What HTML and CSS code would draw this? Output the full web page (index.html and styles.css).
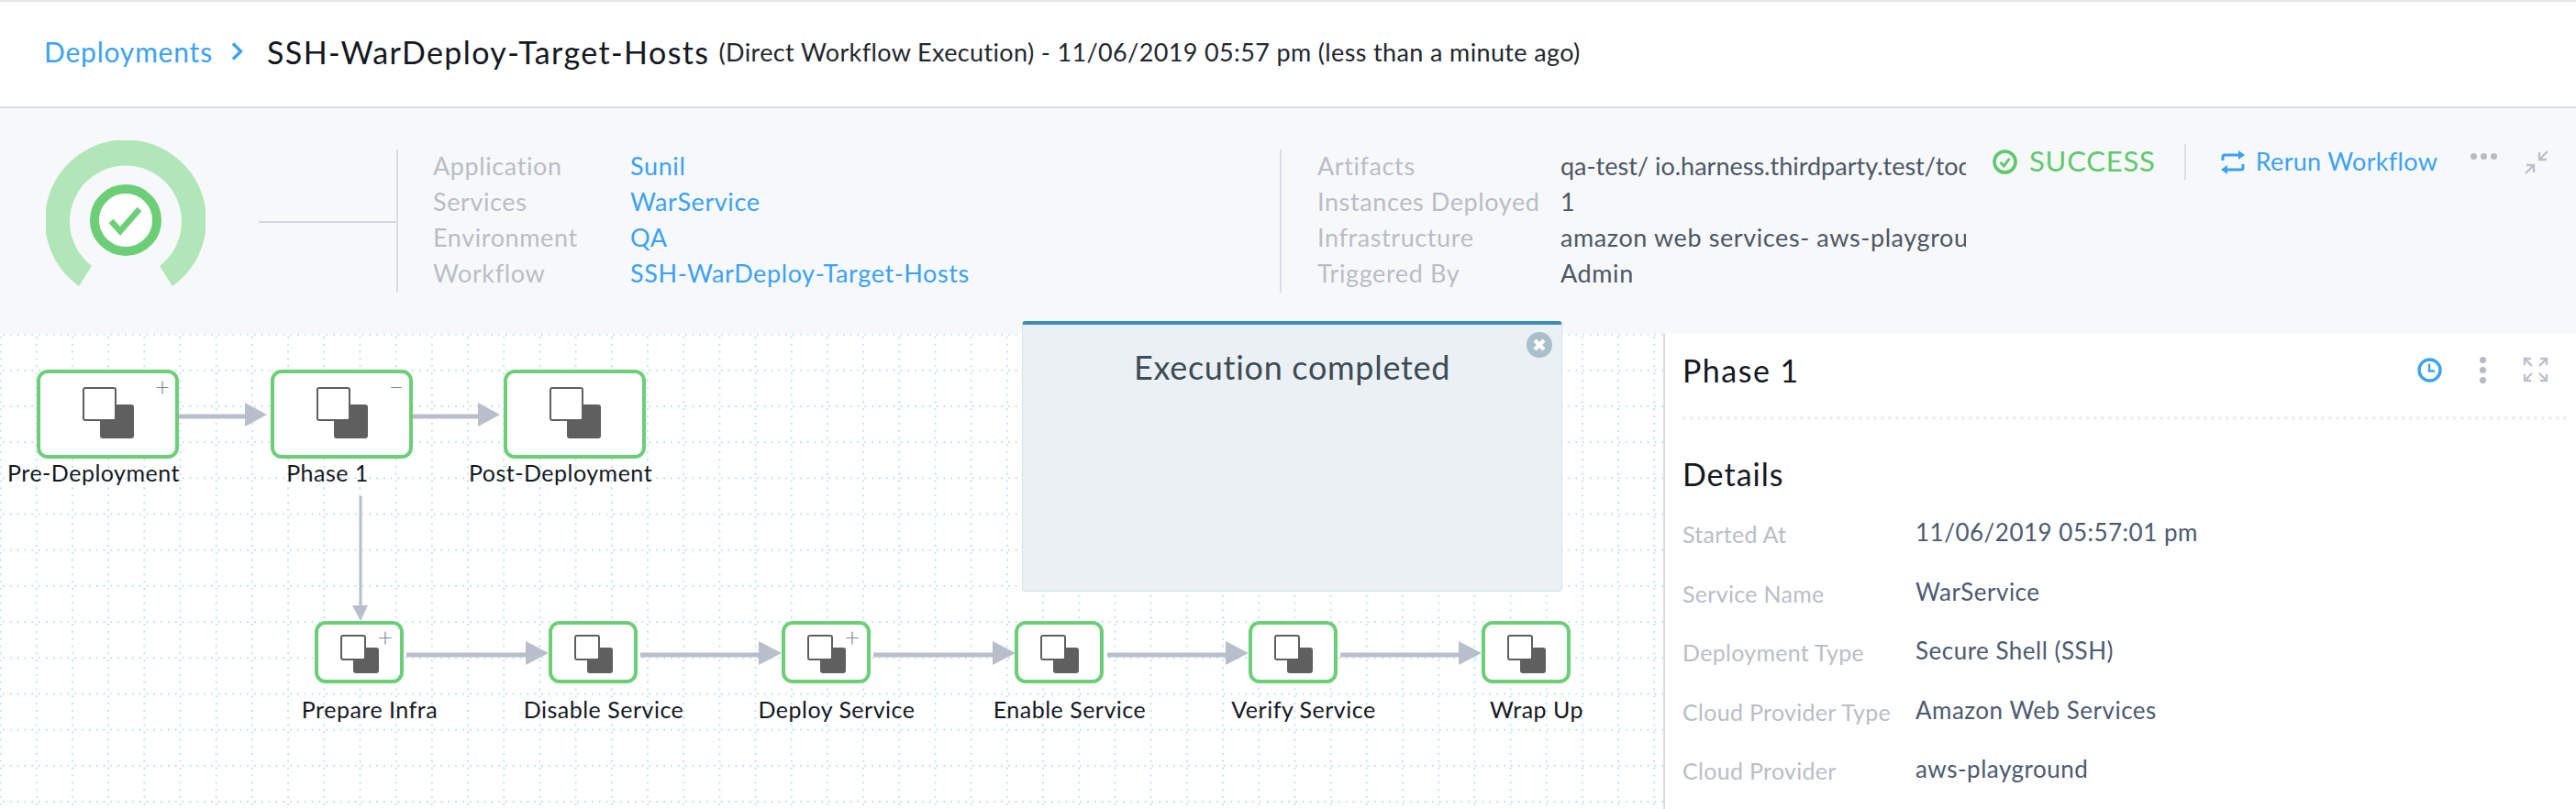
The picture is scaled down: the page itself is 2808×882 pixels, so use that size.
FILE: index.html
```html
<!DOCTYPE html>
<html lang="en">
<head>
    <meta charset="UTF-8" />
    <title>Deployments</title>
    <link rel="stylesheet" href="styles.css">
</head>
<body>
<header class="page-header">
    <a class="crumb">Deployments</a>
    <svg class="crumb-arrow" width="13" height="20" viewBox="0 0 13 20"><path d="M2 1.5 L10.5 10 L2 18.5" fill="none" stroke="#3ba2f2" stroke-width="3.4"/></svg>
    <span class="title">SSH-WarDeploy-Target-Hosts</span>
    <span class="subtitle">(Direct Workflow Execution) - 11/06/2019 05:57 pm (less than a minute ago)</span>
</header>

<section class="summary">
    <svg class="gauge" width="174" height="160" viewBox="50 153 174 160">
        <path d="M86 312 A88 88 0 1 1 188 312 L174 290 A61 61 0 1 0 100 290 Z" fill="#b0e6b8"/>
        <circle cx="137" cy="240" r="34" fill="#fff" stroke="#6ccf77" stroke-width="10"/>
        <path d="M121 241 L131 252 L152 228" fill="none" stroke="#6ccf77" stroke-width="6.5"/>
    </svg>
    <div class="connector"></div>
    <div class="info info-app">
        <div class="info-row"><span class="info-label">Application</span><a class="info-link">Sunil</a></div>
        <div class="info-row"><span class="info-label">Services</span><a class="info-link">WarService</a></div>
        <div class="info-row"><span class="info-label">Environment</span><a class="info-link">QA</a></div>
        <div class="info-row"><span class="info-label">Workflow</span><a class="info-link">SSH-WarDeploy-Target-Hosts</a></div>
    </div>
    <div class="info info-run">
        <div class="info-row"><span class="info-label">Artifacts</span><span class="info-value info-artifact">qa-test/ io.harness.thirdparty.test/todolist</span></div>
        <div class="info-row"><span class="info-label">Instances Deployed</span><span class="info-value">1</span></div>
        <div class="info-row"><span class="info-label">Infrastructure</span><span class="info-value">amazon web services- aws-playground</span></div>
        <div class="info-row"><span class="info-label">Triggered By</span><span class="info-value">Admin</span></div>
    </div>
    <div class="actions">
        <svg class="status-icon" width="27" height="27" viewBox="0 0 27 27">
            <circle cx="13.5" cy="13.5" r="11.5" fill="none" stroke="#5fc96d" stroke-width="3.6"/>
            <path d="M8.5 14 L12.3 18 L18.5 9.8" fill="none" stroke="#5fc96d" stroke-width="3"/>
        </svg>
        <span class="status">SUCCESS</span>
        <span class="divider"></span>
        <svg class="rerun-icon" width="28" height="28" viewBox="0 0 28 28">
            <path d="M3 12 V8 Q3 6 5 6 H21 M25 16 V20 Q25 22 23 22 H7" fill="none" stroke="#3ba2f2" stroke-width="3"/>
            <path d="M20 1 L27 6 L20 11 Z M8 17 L1 22 L8 27 Z" fill="#3ba2f2"/>
        </svg>
        <a class="rerun">Rerun Workflow</a>
        <span class="more-dots"><i></i><i></i><i></i></span>
        <svg class="corner-icon" width="28" height="28" viewBox="0 0 28 28">
            <path d="M26 2 L17 11 M17 3 V11 H25 M2 26 L11 17 M3 17 H11 V25" fill="none" stroke="#bcc0c8" stroke-width="2.4"/>
        </svg>
    </div>
</section>

<main class="workspace">
    <div class="canvas">
        <svg class="edges" width="1813" height="518" viewBox="0 364 1813 518">
            <g class="edge-big">
                <path d="M195 454 H270 M449 454 H524"/>
            </g>
            <path class="edge-down" d="M393 541 V662"/>
            <g class="edge-small">
                <path d="M443 714 H575 M698 714 H830 M952 714 H1084 M1207 714 H1339 M1461 714 H1593"/>
            </g>
            <g class="edge-head">
                <polygon points="267,439 291,452 267,465"/>
                <polygon points="521,439 545,452 521,465"/>
                <polygon points="384,660 401,660 393,677"/>
                <polygon points="573,699 598,712 573,725"/>
                <polygon points="827,699 852,712 827,725"/>
                <polygon points="1082,699 1107,712 1082,725"/>
                <polygon points="1336,699 1361,712 1336,725"/>
                <polygon points="1590,699 1615,712 1590,725"/>
            </g>
        </svg>

        <div class="node node-big n-pre">
            <div class="node-box"><span class="shape-back"></span><span class="shape-front"></span><span class="toggle">+</span></div>
            <div class="node-label">Pre-Deployment</div>
        </div>
        <div class="node node-big n-phase">
            <div class="node-box"><span class="shape-back"></span><span class="shape-front"></span><span class="toggle">&minus;</span></div>
            <div class="node-label">Phase 1</div>
        </div>
        <div class="node node-big n-post">
            <div class="node-box"><span class="shape-back"></span><span class="shape-front"></span></div>
            <div class="node-label">Post-Deployment</div>
        </div>

        <div class="node node-small n-s1">
            <div class="node-box"><span class="shape-back"></span><span class="shape-front"></span><span class="toggle">+</span></div>
            <div class="node-label">Prepare Infra</div>
        </div>
        <div class="node node-small n-s2">
            <div class="node-box"><span class="shape-back"></span><span class="shape-front"></span></div>
            <div class="node-label">Disable Service</div>
        </div>
        <div class="node node-small n-s3">
            <div class="node-box"><span class="shape-back"></span><span class="shape-front"></span><span class="toggle">+</span></div>
            <div class="node-label">Deploy Service</div>
        </div>
        <div class="node node-small n-s4">
            <div class="node-box"><span class="shape-back"></span><span class="shape-front"></span></div>
            <div class="node-label">Enable Service</div>
        </div>
        <div class="node node-small n-s5">
            <div class="node-box"><span class="shape-back"></span><span class="shape-front"></span></div>
            <div class="node-label">Verify Service</div>
        </div>
        <div class="node node-small n-s6">
            <div class="node-box"><span class="shape-back"></span><span class="shape-front"></span></div>
            <div class="node-label">Wrap Up</div>
        </div>

        <div class="toast">
            <svg class="toast-close" width="28" height="28" viewBox="0 0 28 28">
                <circle cx="14" cy="14" r="14" fill="#a9bfcc"/>
                <path d="M9 9 L19 19 M19 9 L9 19" stroke="#fff" stroke-width="4.4"/>
            </svg>
            <div class="toast-text">Execution completed</div>
        </div>
    </div>

    <aside class="panel">
        <div class="panel-head">
            <h2>Phase 1</h2>
            <svg class="clock" width="27" height="27" viewBox="0 0 27 27">
                <circle cx="13.5" cy="13.5" r="11.5" fill="none" stroke="#3ba2f2" stroke-width="3.4"/>
                <path d="M13 6.5 V14.5 H19" fill="none" stroke="#3ba2f2" stroke-width="2.4"/>
            </svg>
            <span class="kebab"><i></i><i></i><i></i></span>
            <svg class="corner-icon" width="28" height="28" viewBox="0 0 28 28">
                <path d="M2 2 L10 10 M2 9 V2 H9 M26 2 L18 10 M19 2 H26 V9 M2 26 L10 18 M2 19 V26 H9 M26 26 L18 18 M26 19 V26 H19" fill="none" stroke="#bcc0c8" stroke-width="2.4"/>
            </svg>
        </div>
        <h3>Details</h3>
        <div class="detail"><span class="detail-label">Started At</span><span class="detail-value">11/06/2019 05:57:01 pm</span></div>
        <div class="detail"><span class="detail-label">Service Name</span><span class="detail-value">WarService</span></div>
        <div class="detail"><span class="detail-label">Deployment Type</span><span class="detail-value">Secure Shell (SSH)</span></div>
        <div class="detail"><span class="detail-label">Cloud Provider Type</span><span class="detail-value">Amazon Web Services</span></div>
        <div class="detail"><span class="detail-label">Cloud Provider</span><span class="detail-value">aws-playground</span></div>
    </aside>
</main>
</body>
</html>
```

FILE: styles.css
```css
* {
    box-sizing: border-box;
}

html, body {
    height: 100%;
}

body {
    margin: 0;
    width: 2808px;
    height: 882px;
    overflow: hidden;
    display: flex;
    flex-direction: column;
    font-family: Lato, "Open Sans", sans-serif;
    background: white;
}

/* top bar */
.page-header {
    height: 118px;
    flex: none;
    display: flex;
    align-items: center;
    padding: 0 0 6px 48px;
    border-top: 2px solid #e4e6ea;
    border-bottom: 2px solid #d9dce3;
    white-space: nowrap;
}

.crumb {
    font-size: 30px;
    letter-spacing: 0.8px;
    color: #3ba2f2;
}

.crumb-arrow {
    margin: 0 26px 0 20px;
}

.title {
    font-size: 34px;
    letter-spacing: 1.4px;
    color: #14181f;
}

.subtitle {
    margin-left: 10px;
    font-size: 27px;
    letter-spacing: 0.36px;
    color: #22272e;
}

/* summary strip */
.summary {
    height: 246px;
    flex: none;
    display: flex;
    align-items: flex-start;
    padding: 35px 0 0 50px;
    background: #f7f8fa;
    font-size: 27px;
    letter-spacing: 0.6px;
}

.connector {
    width: 150px;
    height: 2px;
    margin: 88px 0 0 58px;
    background: #d5d8e0;
}

.info {
    margin-top: 10px;
    height: 156px;
    border-left: 2px solid #d9dce3;
}

.info-app {
    width: 963px;
    padding-left: 38px;
}

.info-run {
    width: 748px;
    padding-left: 39px;
}

.info-row {
    display: flex;
    height: 39px;
    padding-bottom: 4px;
    align-items: center;
    white-space: nowrap;
}

.info-label {
    flex: none;
    color: #b9bdc7;
}

.info-app .info-label {
    width: 215px;
}

.info-run .info-label {
    width: 265px;
}

.info-link {
    color: #3ba2f2;
}

.info-value {
    width: 442px;
    overflow: hidden;
    color: #4c5766;
}

.info-artifact {
    letter-spacing: 0;
}

.actions {
    display: flex;
    align-items: center;
    height: 39px;
    margin: 4px 0 0 29px;
}

.status {
    margin: 0 0 3px 13px;
    font-size: 31px;
    letter-spacing: 0.8px;
    color: #5fc96d;
}

.divider {
    width: 2px;
    height: 39px;
    margin: 0 37px 0 31px;
    background: #dcdee3;
}

.rerun {
    margin: 0 0 3px 11px;
    font-size: 27px;
    letter-spacing: 0.3px;
    color: #3ba2f2;
}

.more-dots {
    display: flex;
    gap: 4px;
    margin: -12px 29px 0 36px;
}

.more-dots i, .kebab i {
    display: block;
    width: 7px;
    height: 7px;
    border-radius: 50%;
    background: #b6bac4;
}

/* graph area */
.workspace {
    flex: 1;
    display: flex;
    min-height: 0;
}

.canvas {
    position: relative;
    width: 1813px;
    flex: none;
    background-color: white;
    background-image:
        radial-gradient(circle, #bde3ee 1.2px, transparent 1.5px),
        radial-gradient(circle, #bde3ee 1.2px, transparent 1.5px);
    background-size: 7.84px 39.2px, 39.2px 7.84px;
    background-position: 0 -19px, -19px 0;
}

.edges {
    position: absolute;
    left: 0;
    top: 0;
}

.edges path {
    fill: none;
    stroke: #b8bfcb;
}

.edge-big path {
    stroke-width: 5;
}

.edge-down {
    stroke-width: 3;
}

.edge-small path {
    stroke-width: 5;
}

.edge-head polygon {
    fill: #b8bfcb;
}

.node {
    position: absolute;
}

.node-box {
    position: relative;
    border: 4px solid #6ccf77;
    border-radius: 12px;
    background: white;
}

.node-big {
    top: 39px;
    width: 155px;
}

.node-big .node-box {
    height: 97px;
}

.node-small {
    top: 313px;
    width: 97px;
}

.node-small .node-box {
    height: 68px;
}

.n-pre { left: 40px; }
.n-phase { left: 295px; }
.n-post { left: 549px; }
.n-s1 { left: 343px; }
.n-s2 { left: 598px; }
.n-s3 { left: 852px; }
.n-s4 { left: 1106px; }
.n-s5 { left: 1361px; }
.n-s6 { left: 1615px; }

.shape-front, .shape-back {
    position: absolute;
    border-radius: 3px;
}

.shape-back {
    background: #5f5f5f;
}

.shape-front {
    background: white;
    border: 2px solid #5f5f5f;
}

.node-big .shape-front {
    left: 46px;
    top: 15px;
    width: 37px;
    height: 37px;
}

.node-big .shape-back {
    left: 65px;
    top: 34px;
    width: 37px;
    height: 37px;
}

.node-small .shape-front {
    left: 24px;
    top: 11px;
    width: 28px;
    height: 28px;
}

.node-small .shape-back {
    left: 38px;
    top: 25px;
    width: 28px;
    height: 28px;
}

.toggle {
    position: absolute;
    right: 6px;
    top: 1px;
    font-size: 28px;
    line-height: 26px;
    font-weight: 300;
    color: #7d8a9e;
}

.node-small .toggle {
    right: 8px;
    top: 0;
}

.node-label {
    width: 300px;
    text-align: center;
    white-space: nowrap;
    font-size: 25px;
    letter-spacing: 0.5px;
    color: #14181f;
}

.node-big .node-label {
    margin: 0 0 0 -88px;
}

.node-small .node-label {
    margin: 13px 0 0 -90px;
}

/* popup over the graph */
.toast {
    position: absolute;
    left: 1114px;
    top: -14px;
    width: 589px;
    height: 295px;
    background: #ebf0f4;
    border: 1px solid #cfe3ef;
    border-top: 4px solid #3a8fb8;
    border-radius: 4px;
}

.toast-text {
    margin-top: 24px;
    text-align: center;
    font-size: 36px;
    letter-spacing: 0.7px;
    color: #3c4c56;
}

.toast-close {
    position: absolute;
    right: 10px;
    top: 8px;
}

/* side panel */
.panel {
    flex: 1;
    padding: 0 9px 0 19px;
    border-left: 2px solid #d9dce3;
    background: white;
}

.panel-head {
    display: flex;
    align-items: center;
    height: 94px;
    padding: 0 21px 12px 0;
    border-bottom: 4px dotted #eceef2;
}

.panel-head h2 {
    flex: 1;
    margin: 0;
    font-size: 34px;
    letter-spacing: 1.5px;
    font-weight: 400;
    color: #14181f;
}

.kebab {
    display: flex;
    flex-direction: column;
    gap: 4px;
    margin: 0 40px 0 41px;
}

.panel h3 {
    margin: 39px 0 27px;
    font-size: 34px;
    letter-spacing: 1px;
    font-weight: 400;
    line-height: 40px;
    color: #14181f;
}

.detail {
    display: flex;
    height: 64.5px;
    white-space: nowrap;
}

.detail-label {
    width: 254px;
    padding-top: 3px;
    font-size: 25px;
    letter-spacing: 0.3px;
    color: #b9bdc7;
}

.detail-value {
    font-size: 26px;
    letter-spacing: 0.5px;
    color: #4c5a70;
}
```
